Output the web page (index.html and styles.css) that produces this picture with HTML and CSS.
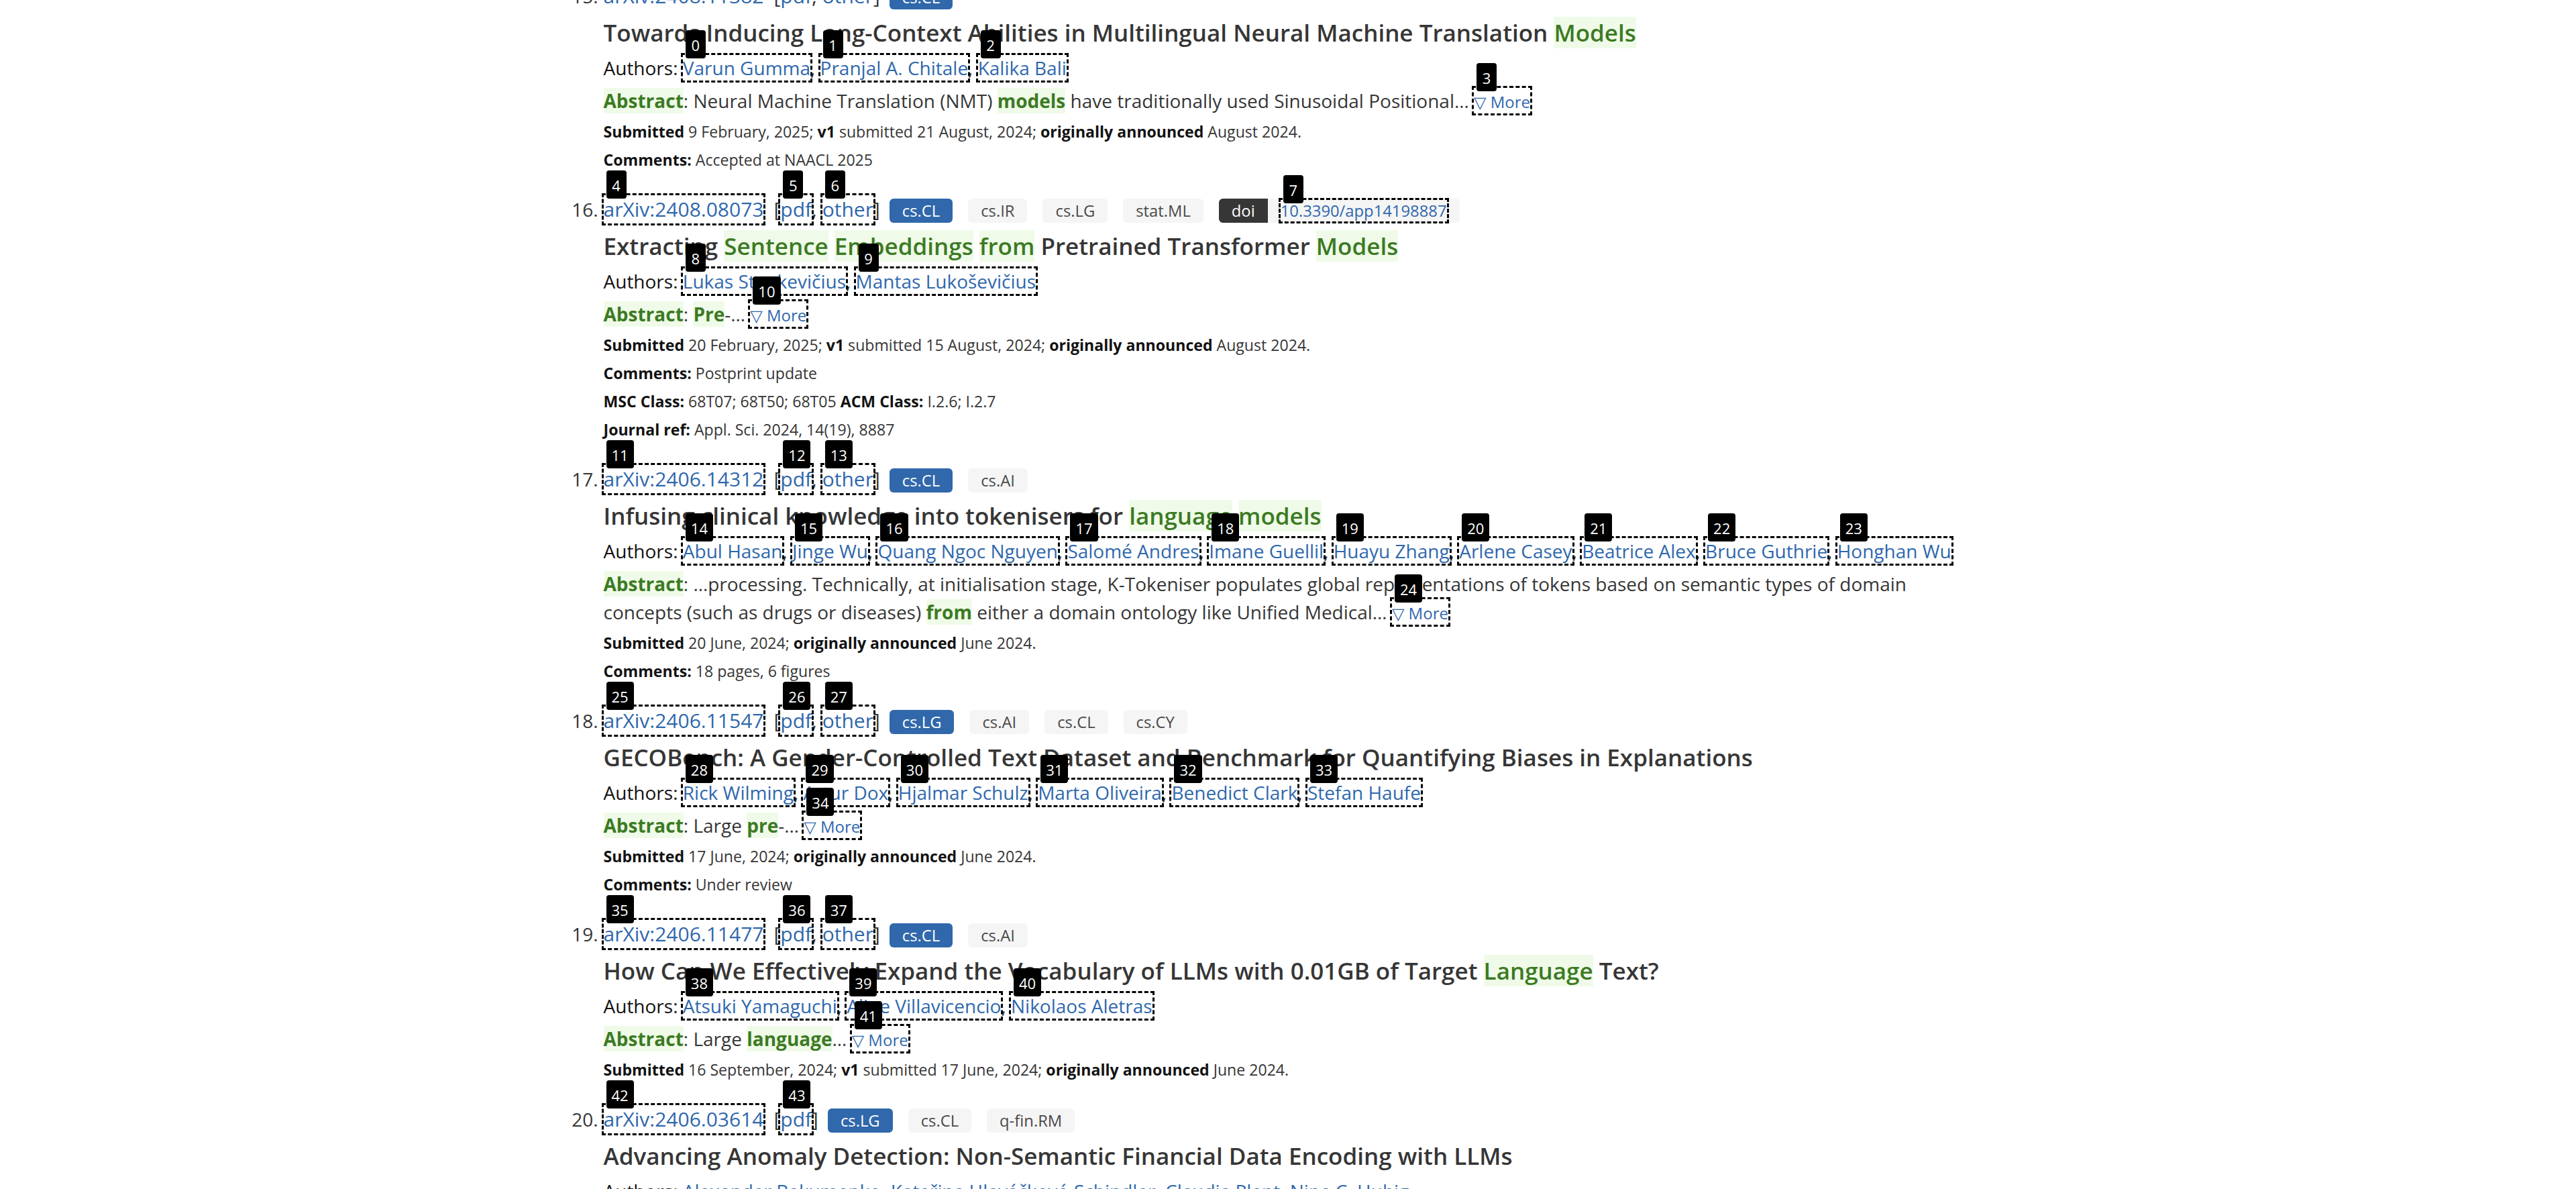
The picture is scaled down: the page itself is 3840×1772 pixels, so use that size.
FILE: index.html
```html
<!DOCTYPE html>
<html lang="en">
<head>
<meta charset="utf-8">
<title>arXiv search results</title>
<link rel="stylesheet" href="styles.css">
</head>
<body>
<main class="container">
<ol class="results">

<li class="result">
  <div class="head">
    <span class="num">15.</span>
    <a class="lnk" href="#">arXiv:2408.11382</a>
    <span class="open">[</span><a class="lnk" href="#">pdf</a><span class="sep">,&nbsp;</span><a class="lnk" href="#">other</a><span class="close">]</span>
    <div class="tags"><span class="tag is-link">cs.CL</span></div>
  </div>
  <p class="title">Towards Inducing Long-Context Abilities in Multilingual Neural Machine Translation <span class="hit">Models</span></p>
  <p class="authors"><span class="lab">Authors:</span> <span class="mk"><a class="lnk" href="#">Varun Gumma</a><span class="lbl">0</span></span>, <span class="mk"><a class="lnk" href="#">Pranjal A. Chitale</a><span class="lbl">1</span></span>, <span class="mk"><a class="lnk" href="#">Kalika Bali</a><span class="lbl">2</span></span></p>
  <p class="abstract"><span class="hit b">Abstract</span>: Neural Machine Translation (NMT) <span class="hit b">models</span> have traditionally used Sinusoidal Positional… <span class="mk more"><a class="lnk" href="#">▽ More</a><span class="lbl">3</span></span></p>
  <p class="meta first"><b>Submitted</b> 9 February, 2025; <b>v1</b> submitted 21 August, 2024; <b>originally announced</b> August 2024.</p>
  <p class="meta"><b>Comments:</b> Accepted at NAACL 2025</p>
</li>

<li class="result">
  <div class="head">
    <span class="num">16.</span>
    <span class="mk"><a class="lnk" href="#">arXiv:2408.08073</a><span class="lbl">4</span></span>
    <span class="open">[</span><span class="mk"><a class="lnk" href="#">pdf</a><span class="lbl">5</span></span><span class="sep">,&nbsp;</span><span class="mk"><a class="lnk" href="#">other</a><span class="lbl">6</span></span><span class="close">]</span>
    <div class="tags">
      <span class="tag is-link">cs.CL</span>
      <span class="tag">cs.IR</span>
      <span class="tag">cs.LG</span>
      <span class="tag">stat.ML</span>
      <span class="addons"><span class="tag is-dark">doi</span><span class="tag ext"><span class="mk"><a class="lnk" href="#">10.3390/app14198887</a><span class="lbl">7</span></span></span></span>
    </div>
  </div>
  <p class="title">Extracting <span class="hit">Sentence</span> <span class="hit">Embeddings</span> <span class="hit">from</span> Pretrained Transformer <span class="hit">Models</span></p>
  <p class="authors"><span class="lab">Authors:</span> <span class="mk"><a class="lnk" href="#">Lukas Stankevičius</a><span class="lbl">8</span></span>, <span class="mk"><a class="lnk" href="#">Mantas Lukoševičius</a><span class="lbl">9</span></span></p>
  <p class="abstract"><span class="hit b">Abstract</span>: <span class="hit b">Pre</span>-… <span class="mk more"><a class="lnk" href="#">▽ More</a><span class="lbl">10</span></span></p>
  <p class="meta first"><b>Submitted</b> 20 February, 2025; <b>v1</b> submitted 15 August, 2024; <b>originally announced</b> August 2024.</p>
  <p class="meta"><b>Comments:</b> Postprint update</p>
  <p class="meta"><b>MSC Class:</b> 68T07; 68T50; 68T05 <b>ACM Class:</b> I.2.6; I.2.7</p>
  <p class="meta"><b>Journal ref:</b> Appl. Sci. 2024, 14(19), 8887</p>
</li>

<li class="result">
  <div class="head">
    <span class="num">17.</span>
    <span class="mk"><a class="lnk" href="#">arXiv:2406.14312</a><span class="lbl">11</span></span>
    <span class="open">[</span><span class="mk"><a class="lnk" href="#">pdf</a><span class="lbl">12</span></span><span class="sep">,&nbsp;</span><span class="mk"><a class="lnk" href="#">other</a><span class="lbl">13</span></span><span class="close">]</span>
    <div class="tags">
      <span class="tag is-link">cs.CL</span>
      <span class="tag">cs.AI</span>
    </div>
  </div>
  <p class="title">Infusing clinical knowledge into tokenisers for <span class="hit">language</span> <span class="hit">models</span></p>
  <p class="authors"><span class="lab">Authors:</span> <span class="mk"><a class="lnk" href="#">Abul Hasan</a><span class="lbl">14</span></span>, <span class="mk"><a class="lnk" href="#">Jinge Wu</a><span class="lbl">15</span></span>, <span class="mk"><a class="lnk" href="#">Quang Ngoc Nguyen</a><span class="lbl">16</span></span>, <span class="mk"><a class="lnk" href="#">Salomé Andres</a><span class="lbl">17</span></span>, <span class="mk"><a class="lnk" href="#">Imane Guellil</a><span class="lbl">18</span></span>, <span class="mk"><a class="lnk" href="#">Huayu Zhang</a><span class="lbl">19</span></span>, <span class="mk"><a class="lnk" href="#">Arlene Casey</a><span class="lbl">20</span></span>, <span class="mk"><a class="lnk" href="#">Beatrice Alex</a><span class="lbl">21</span></span>, <span class="mk"><a class="lnk" href="#">Bruce Guthrie</a><span class="lbl">22</span></span>, <span class="mk"><a class="lnk" href="#">Honghan Wu</a><span class="lbl">23</span></span></p>
  <p class="abstract"><span class="hit b">Abstract</span>: …processing. Technically, at initialisation stage, K-Tokeniser populates global representations of tokens based on semantic types of domain concepts (such as drugs or diseases) <span class="hit b">from</span> either a domain ontology like Unified Medical… <span class="mk more"><a class="lnk" href="#">▽ More</a><span class="lbl">24</span></span></p>
  <p class="meta first"><b>Submitted</b> 20 June, 2024; <b>originally announced</b> June 2024.</p>
  <p class="meta"><b>Comments:</b> 18 pages, 6 figures</p>
</li>

<li class="result">
  <div class="head">
    <span class="num">18.</span>
    <span class="mk"><a class="lnk" href="#">arXiv:2406.11547</a><span class="lbl">25</span></span>
    <span class="open">[</span><span class="mk"><a class="lnk" href="#">pdf</a><span class="lbl">26</span></span><span class="sep">,&nbsp;</span><span class="mk"><a class="lnk" href="#">other</a><span class="lbl">27</span></span><span class="close">]</span>
    <div class="tags">
      <span class="tag is-link">cs.LG</span>
      <span class="tag">cs.AI</span>
      <span class="tag">cs.CL</span>
      <span class="tag">cs.CY</span>
    </div>
  </div>
  <p class="title">GECOBench: A Gender-Controlled Text Dataset and Benchmark for Quantifying Biases in Explanations</p>
  <p class="authors"><span class="lab">Authors:</span> <span class="mk"><a class="lnk" href="#">Rick Wilming</a><span class="lbl">28</span></span>, <span class="mk"><a class="lnk" href="#">Artur Dox</a><span class="lbl">29</span></span>, <span class="mk"><a class="lnk" href="#">Hjalmar Schulz</a><span class="lbl">30</span></span>, <span class="mk"><a class="lnk" href="#">Marta Oliveira</a><span class="lbl">31</span></span>, <span class="mk"><a class="lnk" href="#">Benedict Clark</a><span class="lbl">32</span></span>, <span class="mk"><a class="lnk" href="#">Stefan Haufe</a><span class="lbl">33</span></span></p>
  <p class="abstract"><span class="hit b">Abstract</span>: Large <span class="hit b">pre</span>-… <span class="mk more"><a class="lnk" href="#">▽ More</a><span class="lbl">34</span></span></p>
  <p class="meta first"><b>Submitted</b> 17 June, 2024; <b>originally announced</b> June 2024.</p>
  <p class="meta"><b>Comments:</b> Under review</p>
</li>

<li class="result">
  <div class="head">
    <span class="num">19.</span>
    <span class="mk"><a class="lnk" href="#">arXiv:2406.11477</a><span class="lbl">35</span></span>
    <span class="open">[</span><span class="mk"><a class="lnk" href="#">pdf</a><span class="lbl">36</span></span><span class="sep">,&nbsp;</span><span class="mk"><a class="lnk" href="#">other</a><span class="lbl">37</span></span><span class="close">]</span>
    <div class="tags">
      <span class="tag is-link">cs.CL</span>
      <span class="tag">cs.AI</span>
    </div>
  </div>
  <p class="title">How Can We Effectively Expand the Vocabulary of LLMs with 0.01GB of Target <span class="hit">Language</span> Text?</p>
  <p class="authors"><span class="lab">Authors:</span> <span class="mk"><a class="lnk" href="#">Atsuki Yamaguchi</a><span class="lbl">38</span></span>, <span class="mk"><a class="lnk" href="#">Aline Villavicencio</a><span class="lbl">39</span></span>, <span class="mk"><a class="lnk" href="#">Nikolaos Aletras</a><span class="lbl">40</span></span></p>
  <p class="abstract"><span class="hit b">Abstract</span>: Large <span class="hit b">language</span>… <span class="mk more"><a class="lnk" href="#">▽ More</a><span class="lbl">41</span></span></p>
  <p class="meta first"><b>Submitted</b> 16 September, 2024; <b>v1</b> submitted 17 June, 2024; <b>originally announced</b> June 2024.</p>
</li>

<li class="result">
  <div class="head">
    <span class="num">20.</span>
    <span class="mk"><a class="lnk" href="#">arXiv:2406.03614</a><span class="lbl">42</span></span>
    <span class="open">[</span><span class="mk"><a class="lnk" href="#">pdf</a><span class="lbl">43</span></span><span class="close">]</span>
    <div class="tags">
      <span class="tag is-link">cs.LG</span>
      <span class="tag">cs.CL</span>
      <span class="tag">q-fin.RM</span>
    </div>
  </div>
  <p class="title">Advancing Anomaly Detection: Non-Semantic Financial Data Encoding with LLMs</p>
  <p class="authors"><span class="lab">Authors:</span> <a class="lnk" href="#">Alexander Bakumenko</a>, <a class="lnk" href="#">Kateřina Hlaváčková-Schindler</a>, <a class="lnk" href="#">Claudia Plant</a>, <a class="lnk" href="#">Nina C. Hubig</a></p>
</li>

</ol>
</main>
</body>
</html>
```

FILE: styles.css
```css
* {
  box-sizing: border-box;
}

html,
body {
  margin: 0;
  padding: 0;
  background: #ffffff;
}

body {
  font-family: "Open Sans", "Noto Sans", "DejaVu Sans", sans-serif;
  font-size: 28px;
  color: #363636;
  height: 1772px;
  overflow: hidden;
}

.container {
  max-width: 2285px;
  margin: 0 auto;
  padding: 0 122px;
}

.results {
  list-style: none;
  margin: -27px 0 0;
  padding: 0;
}

.result {
  margin-bottom: 32px;
}

.lnk {
  color: #2f68ad;
  text-decoration: none;
}

/* header line: number, id, links, tags */
.head {
  display: flex;
  align-items: baseline;
  font-size: 30px;
  line-height: 42px;
  white-space: nowrap;
}

.num {
  width: 70px;
  margin-left: -70px;
  padding-right: 8px;
  text-align: right;
  font-size: 28px;
  color: #363636;
}

.open {
  margin-left: 15px;
}

.tags {
  display: flex;
  align-items: baseline;
  gap: 23px;
  margin-left: 14px;
}

.tag {
  display: inline-block;
  font-size: 23.8px;
  line-height: 36px;
  height: 36px;
  padding: 0 19px;
  border-radius: 6px;
  background: #f5f5f5;
  color: #4a4a4a;
}

.tag.is-link {
  background: #3068ab;
  color: #ffffff;
}

.addons {
  display: flex;
  align-items: baseline;
}

.tag.is-dark {
  background: #363636;
  color: #ffffff;
  border-radius: 6px 0 0 6px;
}

.tag.ext {
  border-radius: 0 6px 6px 0;
}

.tag.ext .lnk {
  font-size: 23.8px;
}

/* text blocks */
.title {
  margin: 9px 0 0;
  font-size: 35px;
  line-height: 50px;
  font-weight: 600;
  color: #363636;
}

.authors {
  margin: 6px 0 0;
  line-height: 42px;
}

.lab {
  color: #121212;
}

.abstract {
  margin: 7px 0 0;
  line-height: 42px;
  color: #363636;
}

.meta {
  margin: 0;
  font-size: 23.1px;
  line-height: 42px;
  color: #363636;
}

.meta.first {
  margin-top: 2px;
}

.meta b {
  font-weight: 700;
  color: #121212;
}

.hit {
  color: #3c7a24;
  background: #effbe8;
}

.hit.b {
  font-weight: 700;
}

.more .lnk {
  font-size: 24px;
}

/* annotation marks */
.mk {
  position: relative;
  outline: 3px dashed #000000;
}

.lbl {
  position: absolute;
  left: 4px;
  top: -37px;
  height: 42px;
  min-width: 30px;
  padding: 0 8px;
  background: #000000;
  color: #ffffff;
  font-family: "Open Sans", "DejaVu Sans", sans-serif;
  font-size: 22px;
  font-weight: 400;
  line-height: 44px;
  text-align: center;
  border-radius: 4px;
  z-index: 2;
  white-space: nowrap;
}
```
